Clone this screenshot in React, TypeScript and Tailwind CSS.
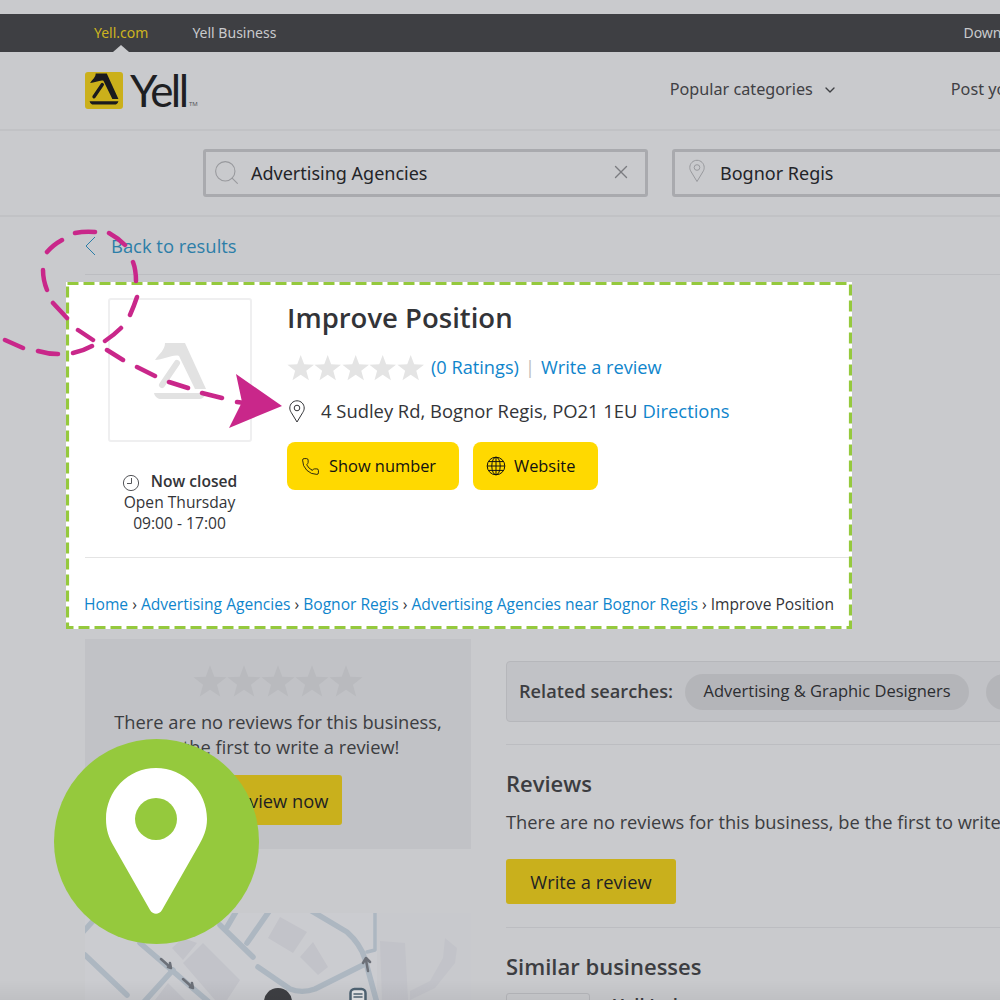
import { ChevronDown, Phone, Search, X } from "lucide-react";

const STAR = "M13.5 0.5 L16.9 9.6 L26.6 10 L19 16 L21.6 25.4 L13.5 20 L5.4 25.4 L8 16 L0.4 10 L10.1 9.6 Z";

function Stars({ className, size }: { className: string; size: number }) {
  return (
    <div className="flex">
      {[0, 1, 2, 3, 4].map((i) => (
        <svg key={i} width={size} height={size} viewBox="0 0 27 26" className={className}>
          <path d={STAR} fill="currentColor" />
        </svg>
      ))}
    </div>
  );
}

function LogoMark({ className, width, height }: { className: string; width: number; height: number }) {
  return (
    <svg width={width} height={height} viewBox="0 0 54 58" className={className} fill="none">
      <path d="M12 1 L32 1 L53 47 L42 47 L26 14 C20 12 10 18 2 18 C6 12 12 8 12 1 Z" fill="currentColor" />
      <path d="M9 43 L24 21" stroke="currentColor" strokeWidth="6" strokeLinecap="round" />
      <path d="M1 51 H53 C52 55 49 57 46 57 H8 C5 57 2 55 1 51 Z" fill="currentColor" />
    </svg>
  );
}

function Pin({ className, width, height }: { className: string; width: number; height: number }) {
  return (
    <svg width={width} height={height} viewBox="0 0 16 23" fill="none" stroke="currentColor" strokeWidth="1" className={className}>
      <path d="M8 22 L2.2 12.4 C1.2 10.8 0.8 9.6 0.8 8 C0.8 4 4 0.8 8 0.8 C12 0.8 15.2 4 15.2 8 C15.2 9.6 14.8 10.8 13.8 12.4 Z" />
      <circle cx="8" cy="8" r="2.8" />
    </svg>
  );
}

function TopBar() {
  return (
    <div className="relative flex h-[38px] items-center whitespace-nowrap bg-[#3e3f43] pl-[94px] text-[14px] text-[#c9cacd] font-['Noto_Sans',sans-serif]">
      <span className="mt-[-2px] text-[#cdb41f]">Yell.com</span>
      <span className="ml-[44px] mt-[-2px] shrink-0">Yell Business</span>
      <span className="ml-[687px] mt-[-2px] shrink-0">Download</span>
      <div className="absolute bottom-0 left-[113px] h-0 w-0 border-x-[8px] border-b-[7px] border-x-transparent border-b-[#c9cacd]" />
    </div>
  );
}

function Header() {
  return (
    <div className="flex h-[79px] items-center whitespace-nowrap border-b-2 border-[#c1c2c5] pl-[85px] font-['Noto_Sans',sans-serif]">
      <div className="flex h-[37px] w-[38px] shrink-0 items-end justify-center overflow-hidden rounded-[3px] bg-[#cbb01b] pb-[3px]">
        <LogoMark className="text-[#1a1a1e]" width={30} height={34} />
      </div>
      <span className="ml-[7px] mt-[-2px] w-[59px] shrink-0 font-['Lato',sans-serif] text-[44px] leading-none tracking-[-2.5px] text-[#1e1f23]">Yell</span>
      <span className="mt-[26px] shrink-0 text-[6px] leading-none text-[#55565a]">TM</span>
      <span className="ml-[472px] mt-[-2px] shrink-0 text-[16.2px] text-[#3f4044]">Popular categories</span>
      <ChevronDown size={16} strokeWidth={2} className="ml-[9px] mt-[-2px] shrink-0 text-[#3f4044]" />
      <span className="ml-[113px] mt-[-2px] shrink-0 text-[16.2px] text-[#3f4044]">Post your</span>
    </div>
  );
}

function SearchRow() {
  return (
    <div className="flex h-[86px] items-start gap-[24px] whitespace-nowrap border-b-2 border-[#c1c2c5] pl-[203px] pt-[18px] font-['Noto_Sans',sans-serif] text-[18px] text-[#232428]">
      <div className="flex h-[48px] w-[445px] shrink-0 items-center rounded-[3px] border-[3px] border-[#a9aaae] pl-[6px] pr-[13px]">
        <Search size={29} strokeWidth={0.9} className="mt-[-2px] shrink-0 text-[#98999d]" />
        <span className="ml-[10px] flex-1">Advertising Agencies</span>
        <X size={22} strokeWidth={1.5} className="mt-[-3px] text-[#7b7c80]" />
      </div>
      <div className="flex h-[48px] w-[400px] shrink-0 items-center rounded-[3px] border-[3px] border-[#a9aaae] pl-[14px]">
        <Pin className="mt-[-4px] shrink-0 text-[#98999d]" width={16} height={24} />
        <span className="ml-[15px]">Bognor Regis</span>
      </div>
    </div>
  );
}

function BackRow() {
  return (
    <div className="ml-[85px] flex h-[58px] items-center whitespace-nowrap border-b border-[#bcbdc1] text-[18.4px] text-[#2c7ea8]">
      <svg width="11" height="20" viewBox="0 0 11 20" fill="none" stroke="currentColor" strokeWidth="1" className="shrink-0">
        <path d="M10 1 L1 10 L10 19" />
      </svg>
      <span className="ml-[15px]">Back to results</span>
    </div>
  );
}

function Globe() {
  return (
    <svg width="20" height="20" viewBox="0 0 20 20" fill="none" stroke="currentColor" strokeWidth="1" className="shrink-0">
      <circle cx="10" cy="10" r="8.8" />
      <ellipse cx="10" cy="10" rx="4.2" ry="8.8" />
      <path d="M10 1.2 V18.8 M1.2 10 H18.8 M2.6 5.6 H17.4 M2.6 14.4 H17.4" />
    </svg>
  );
}

function BusinessCard() {
  return (
    <div className="relative ml-[66px] mt-[7px] h-[347px] w-[786px] bg-white text-[#333438]">
      <div className="relative ml-[19px] mr-[1px] flex h-[276px] flex-col border-b border-[#e4e4e4] pt-[16px]">
        <div className="flex">
          <div className="flex w-[191px] shrink-0 flex-col items-start pl-[4px]">
            <div className="ml-[19px] flex h-[144px] w-[144px] items-center justify-center rounded-[3px] border-2 border-[#efeff0]">
              <LogoMark className="mt-[2px] text-[#e2e2e2]" width={54} height={58} />
            </div>
            <div className="mt-[29px] w-[181px] whitespace-nowrap text-center text-[15.6px] leading-[21px]">
              <div className="flex items-center justify-center font-semibold">
                <svg width="18" height="18" viewBox="0 0 18 18" fill="none" stroke="currentColor" strokeWidth="1" className="mr-[11px] mt-[2px] text-[#55565a]">
                  <circle cx="9" cy="9" r="7.6" />
                  <path d="M9.5 4 V9.5 H5" />
                </svg>
                <span>Now closed</span>
              </div>
              <div>Open Thursday</div>
              <div>09:00 - 17:00</div>
            </div>
          </div>
          <div className="ml-[11px] flex flex-col whitespace-nowrap">
            <h1 className="mt-[1px] text-[27.5px] font-semibold leading-[38px] text-[#333438]">Improve Position</h1>
            <div className="mt-[17px] flex h-[27px] items-center text-[18.2px] text-[#0f85cc]">
              <Stars className="text-[#e4e4e4]" size={27.4} />
              <span className="ml-[7px]">(0 Ratings)</span>
              <span className="mx-[6px] text-[#bbbbbb]">|</span>
              <span>Write a review</span>
            </div>
            <div className="mt-[17px] flex h-[26px] items-center text-[18.4px]">
              <Pin className="ml-[2px] shrink-0 text-[#333438]" width={16} height={23} />
              <span className="ml-[16px]">4 Sudley Rd, Bognor Regis, PO21 1EU</span>
              <span className="ml-[5px] text-[#0f85cc]">Directions</span>
            </div>
            <div className="mt-[18px] flex gap-[14px] text-[16.4px] font-medium text-[#111111]">
              <div className="flex h-[48px] w-[172px] items-center rounded-[8px] bg-[#ffd900] pl-[14px]">
                <Phone size={19} strokeWidth={1.1} className="shrink-0" />
                <span className="ml-[9px]">Show number</span>
              </div>
              <div className="flex h-[48px] w-[125px] items-center rounded-[8px] bg-[#ffd900] pl-[13px]">
                <Globe />
                <span className="ml-[8px]">Website</span>
              </div>
            </div>
          </div>
        </div>
      </div>
      <div className="relative ml-[18px] mt-[35px] whitespace-nowrap text-[15.6px] leading-[22px] text-[#333438]">
        <span className="text-[#0f85cc]">Home</span> › <span className="text-[#0f85cc]">Advertising Agencies</span> ›{" "}
        <span className="text-[#0f85cc]">Bognor Regis</span> › <span className="text-[#0f85cc]">Advertising Agencies near Bognor Regis</span> › Improve Position
      </div>
      <svg className="absolute inset-0" width="786" height="347" fill="none">
        <rect x="1.5" y="1.5" width="783" height="344" stroke="#95c93d" strokeWidth="3.2" strokeDasharray="11 5" />
      </svg>
    </div>
  );
}

function MapPreview() {
  return (
    <div className="mt-[64px] h-[87px] w-[386px] overflow-hidden bg-[#cbccd0]">
      <svg width="386" height="87" viewBox="0 0 386 87" fill="none" strokeLinecap="round" strokeLinejoin="round">
        <path d="M292 0 H386 V87 H292 Z" fill="#c8c9cd" />
        <path d="M195 4 L222 19 L208 40 L183 25 Z M228 29 L243 54 L233 62 L215 44 Z M118 30 L155 67 L142 87 L130 87 L98 50 Z M98 25 L112 30 L98 47 L87 35 Z M83 70 L100 87 H70 Z M295 28 L320 30 L323 87 L297 87 Z M360 25 L372 35 L370 50 L350 75 L325 87 L325 78 L345 68 L358 45 Z" fill="#c2c3c9" />
        <g stroke="#adb7c1" strokeWidth="5.5">
          <path d="M225 -3 L262 19 C272 28 277 36 280 46 L292 90" />
          <path d="M173 54 L205 76 C212 79 222 79 230 76 L278 52" />
          <path d="M135 12 L168 44" />
          <path d="M0 42 L42 82" />
          <path d="M55 30 L125 90" />
          <path d="M88 57 L58 90" />
          <path d="M185 -3 L162 30" />
          <path d="M152 -3 L142 14" />
          <path d="M290 -3 V37 L282 39" strokeWidth="3.5" />
          <path d="M-3 20 L8 8" />
        </g>
        <path d="M76 46 L85 54 M83 54 L86 55 L85 50 M98 66 L107 74 M105 74 L108 75 L107 70 M283 58 L281 47 M278 50 L281 45 L285 49" stroke="#6c7078" strokeWidth="2.5" />
        <circle cx="193" cy="89" r="14" fill="#3e3f43" />
        <rect x="265.5" y="76" width="15" height="16" rx="4" fill="#e4e5e7" stroke="#4f6373" strokeWidth="2.5" />
        <path d="M269 81 H277 M269 84 H277" stroke="#4f6373" strokeWidth="1.5" />
      </svg>
    </div>
  );
}

function LowerColumns() {
  return (
    <div className="mt-[10px] flex gap-[35px] pl-[85px] text-[#3c3d41]">
      <div className="w-[386px] shrink-0">
        <div className="flex h-[210px] flex-col items-center whitespace-nowrap bg-[#c1c2c6] pt-[25px] text-[18.3px] leading-[25px]">
          <Stars className="text-[#b9babe]" size={34} />
          <p className="mt-[11px] text-center">
            There are no reviews for this business,
            <br />
            be the first to write a review!
          </p>
          <div className="mt-[16px] flex h-[50px] w-[128px] items-center justify-center rounded-[3px] bg-[#c9b01c] text-[#1e1f23]">Review now</div>
        </div>
        <MapPreview />
      </div>
      <div className="min-w-0 flex-1 whitespace-nowrap pt-[22px] text-[18.3px]">
        <div className="flex h-[61px] w-[600px] items-center rounded-[4px] border border-[#b6b7bb] bg-[#c1c2c6] pl-[12px]">
          <span className="text-[18.2px] font-semibold">Related searches:</span>
          <span className="ml-[12px] flex h-[36px] w-[284px] shrink-0 items-center justify-center rounded-full bg-[#b4b5b9] text-[16.5px] text-[#2c2d31]">Advertising &amp; Graphic Designers</span>
          <span className="ml-[17px] h-[36px] w-[100px] shrink-0 rounded-full bg-[#b4b5b9]" />
        </div>
        <div className="mt-[22px] h-px w-[600px] bg-[#bcbdc1]" />
        <h2 className="mt-[22px] text-[22px] font-semibold leading-[32px]">Reviews</h2>
        <p className="mt-[10px] leading-[26px]">There are no reviews for this business, be the first to write a review!</p>
        <div className="mt-[24px] flex h-[45px] w-[170px] items-center justify-center rounded-[3px] bg-[#c9b01c] text-[#1e1f23]">Write a review</div>
        <div className="mt-[23px] h-px w-[600px] bg-[#bcbdc1]" />
        <h2 className="mt-[22px] text-[22px] font-semibold leading-[32px]">Similar businesses</h2>
        <div className="mt-[11px] flex">
          <div className="h-[60px] w-[84px] rounded-[3px] border border-[#b6b7bb]" />
          <span className="ml-[23px] mt-[-2px] font-semibold">Yell Ltd</span>
        </div>
      </div>
    </div>
  );
}

// Pink route drawn over the page, dash by dash to follow the hand-drawn line
function Annotations() {
  return (
    <svg className="absolute inset-0" width="1000" height="1000" fill="none">
      <path
        d="M5 340 L23 348 M38 351 Q48 354 58 354 M73 353 Q83 351 92 346 M105 341 Q114 335 121 328 M130 315 Q134 306 137 297 M136 281 Q136 270 133 262 M109 233 Q118 238 125 245 M75 233 Q85 231 95 232 M47 252 Q53 245 62 240 M43 270 Q43 280 47 290 M53 303 L67 318 M78 330 L93 340 M107 350 L123 360 M137 367 L155 376 M169 382 L188 388 M202 393 L222 398 M237 402 L245 403"
        stroke="#c9278a"
        strokeWidth="4.5"
        strokeLinecap="round"
      />
      <path d="M282 406 L236 374 L242 402 L229 428 Z" fill="#c9278a" />
      <circle cx="156.5" cy="841.5" r="102.5" fill="#95c93d" />
      <path
        d="M156 768 C184 768 207 791 207 819 C207 830 203 838 199 845 L162 910 C159 915 153 915 150 910 L113 845 C109 838 106 830 106 819 C106 791 128 768 156 768 Z"
        fill="white"
      />
      <circle cx="156" cy="819" r="21" fill="#95c93d" />
    </svg>
  );
}

export default function App() {
  return (
    <div className="relative h-[1000px] w-[1000px] overflow-hidden bg-[#c9cacd] font-['Open_Sans',sans-serif]">
      <div className="h-[14px]" />
      <TopBar />
      <Header />
      <SearchRow />
      <BackRow />
      <BusinessCard />
      <LowerColumns />
      <Annotations />
      <div className="absolute inset-x-0 bottom-0 h-[20px] bg-gradient-to-b from-transparent to-black/5" />
    </div>
  );
}
